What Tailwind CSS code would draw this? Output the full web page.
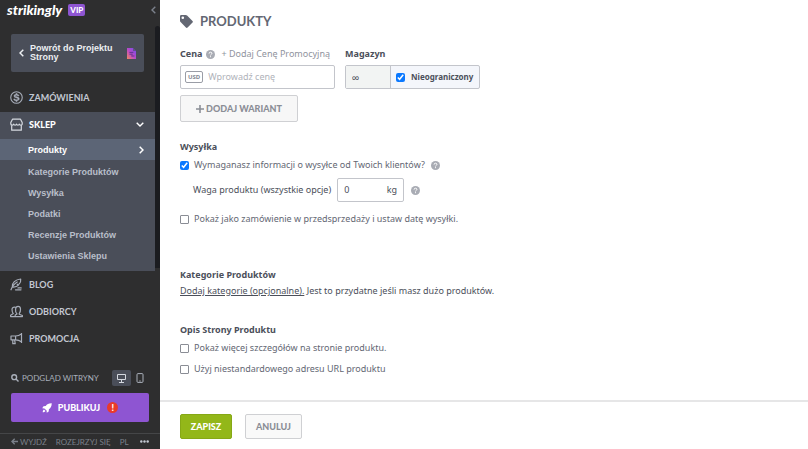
<!DOCTYPE html>
<html lang="pl">
<head>
<meta charset="utf-8">
<meta name="viewport" content="width=device-width, initial-scale=1">
<title>Strikingly – Produkty</title>
<script src="https://cdn.jsdelivr.net/npm/@tailwindcss/browser@4"></script>
</head>
<body class="flex h-screen overflow-hidden bg-white font-['Noto_Sans',sans-serif] text-[10px] leading-4 text-[#4b4f5a]">

<!-- Sidebar -->
<aside class="flex w-40 shrink-0 flex-col bg-[#2e2e2f] font-['Lato',sans-serif] font-bold text-[#c3c8d2]">
  <header class="flex h-5 items-center pr-1 pl-[7px]">
    <a href="#" class="text-[14px] leading-5 font-black text-white italic">strikingly</a>
    <span class="ml-[6px] rounded-xs bg-[#8e55d2] px-[2px] text-[8px] leading-3 font-black text-white">VIP</span>
    <button type="button" aria-label="Zwiń" class="ml-auto text-[#7b818c]">
      <svg class="h-2 w-[5px]" viewBox="0 0 5 8" fill="none" stroke="currentColor" stroke-width="1.4"><path d="M4.3.7 1 4l3.3 3.3"/></svg>
    </button>
  </header>

  <div class="flex">
    <div class="min-w-0 flex-1">
      <a href="#" class="mt-[14px] mr-[11px] ml-[11px] flex h-[38px] items-center rounded-xs bg-[#4a4e59] pr-2 pl-2 font-['Liberation_Sans',sans-serif] text-[9px] leading-[9px] text-[#eceef2]">
        <svg class="mr-[6px] h-2 w-[5px] shrink-0" viewBox="0 0 5 8" fill="none" stroke="currentColor" stroke-width="1.5"><path d="M4.3.7 1 4l3.3 3.3"/></svg>
        <span class="flex-1">Powrót do Projektu Strony</span>
        <svg class="h-[11px] w-[9px] shrink-0" viewBox="0 0 9 11"><defs><linearGradient id="page" x1="0" y1="1" x2="1" y2="0"><stop offset="0" stop-color="#f08a5c"/><stop offset=".45" stop-color="#c04bc4"/><stop offset="1" stop-color="#6a4cf0"/></linearGradient></defs><path fill="url(#page)" d="M0 0h6l3 3v8H0z"/><path d="M6 0v3h3z" fill="#4a4e59" opacity=".6"/><path d="M2.4 4.4h4M2.4 6.2h2.2m1 1.8h1.8M5 5.6v3.2" stroke="#3d2c7c" stroke-width=".7" fill="none"/></svg>
      </a>

      <nav class="mt-3 text-[9px]">
        <a href="#" class="mb-px flex h-[27px] items-center gap-[6px] pl-[10px]">
          <svg class="size-[13px]" viewBox="0 0 14 14" fill="none" stroke="#a7adb9"><circle cx="7" cy="7" r="6.2" stroke-width="1.2"/><path fill="#a7adb9" stroke="#a7adb9" stroke-width=".5" d="M6.400 2.700h1.200v.8c1.200.1 2 .8 2.100 1.800H8.300c-.1-.5-.5-.8-1.300-.8s-1.200.3-1.200.8c0 1.400 4.200.2 4.200 3 0 1.200-.9 2-2.400 2.200v.8H6.400v-.8C4.900 10.400 4 9.600 4 8.500h1.400c.1.600.7.900 1.600.9s1.500-.3 1.500-.9c0-1.600-4.200-.4-4.200-3.100 0-1.100.8-1.800 2.100-1.900z"/></svg>
          ZAMÓWIENIA
        </a>
        <div class="bg-[#4a4e59]">
          <a href="#" class="flex h-[27px] items-center gap-[6px] pr-[11px] pb-[2px] pl-[10px] font-black text-white">
            <svg class="size-[13px]" viewBox="0 0 13 13" fill="none" stroke="#d5d9e0" stroke-width="1.2" stroke-linejoin="round"><path d="M2.500 1.200h8l1.700 3.300v1.400q0 1.300-1.400 1.300T9.300 6q-.2 1.200-1.400 1.200T6.500 6q-.2 1.200-1.400 1.200T3.700 6q-.2 1.200-1.500 1.200T.8 5.900V4.500zM1.700 7.300v4.900h9.600V7.300"/></svg>
            SKLEP
            <svg class="ml-auto h-[5px] w-2" viewBox="0 0 8 5" fill="none" stroke="currentColor" stroke-width="1.4"><path d="M.7.7 4 4 7.300.7"/></svg>
          </a>
          <div class="pb-[5px] font-['Liberation_Sans',sans-serif] text-[9px] text-[#b9bfca]">
            <a href="#" aria-current="page" class="mb-px flex h-[21px] items-center bg-[#5c6576] pr-[11px] pl-7 text-white">
              Produkty
              <svg class="ml-auto h-2 w-[5px]" viewBox="0 0 5 8" fill="none" stroke="currentColor" stroke-width="1.5"><path d="M.7.7 4 4 .7 7.300"/></svg>
            </a>
            <a href="#" class="flex h-[21px] items-center pl-7">Kategorie Produktów</a>
            <a href="#" class="flex h-[21px] items-center pl-7">Wysyłka</a>
            <a href="#" class="flex h-[21px] items-center pl-7">Podatki</a>
            <a href="#" class="flex h-[21px] items-center pl-7">Recenzje Produktów</a>
            <a href="#" class="flex h-[21px] items-center pl-7">Ustawienia Sklepu</a>
          </div>
        </div>
        <a href="#" class="flex h-[27px] items-center gap-[6px] pl-[10px]">
          <svg class="size-[13px]" viewBox="0 0 13 13" fill="none" stroke="#a7adb9" stroke-width="1.2" stroke-linecap="round" stroke-linejoin="round"><path d="M1 11.800C2 8.800 3.800 6.200 7.200 4M2.300 9C1.800 5 5.300 1.500 10.700 1c.3 3-.6 4.300-1.500 5l-2 .3 1.200.9C7 8.700 5 9.300 2.300 9M5.500 11.800h5.500M8 9.900h3.200"/></svg>
          BLOG
        </a>
        <a href="#" class="flex h-[27px] items-center gap-[6px] pl-[10px]">
          <svg class="size-[13px]" viewBox="0 0 13 13" fill="none" stroke="#a7adb9" stroke-width="1.2" stroke-linejoin="round"><path d="M5.200 11.600V10L7 8.900C5.800 7.800 5.300 6 5.600 4c.2-1.700 1.200-2.700 2.500-2.700s2.300 1 2.400 2.700c.1 2-.4 3.700-1.300 4.600v.6l3.200 1.300v1.100zM5.500 2.300C3.500 1.500 2 2.700 2 4.600c0 1.700.4 3 1.300 4L.6 10.200v1.400h4.600"/></svg>
          ODBIORCY
        </a>
        <a href="#" class="flex h-[27px] items-center gap-[6px] pl-[10px]">
          <svg class="size-[13px]" viewBox="0 0 13 13" fill="none" stroke="#a7adb9" stroke-width="1.2" stroke-linejoin="round"><path d="M11.500.9v10M11.300 2C9.600 3.400 8 4 5.500 4H1v3.800h4.500c2.500 0 4 .5 5.800 1.900M2.800 7.900v3.800h2.400l-.6-3.800M5.600 4v3.800"/></svg>
          PROMOCJA
        </a>
      </nav>
    </div>
    <div class="mt-[6px] mb-[84px] w-[5px] rounded-t-full bg-[#1b1c20]"></div>
  </div>

  <div class="mt-auto">
    <div class="flex items-center pr-4 pl-[11px] text-[8px] font-normal text-[#aab0bb]">
      <svg class="mr-[3px] size-2" viewBox="0 0 8 8" fill="none" stroke="currentColor" stroke-width="1.4"><circle cx="3.200" cy="3.200" r="2.400"/><path d="m5 5 2.500 2.500"/></svg>
      PODGLĄD WITRYNY
      <button type="button" aria-label="Komputer" class="ml-auto flex h-4 w-[19px] items-center justify-center rounded-xs bg-[#4a4e59] text-[#d5d9e0]">
        <svg class="h-[9px] w-[9px]" viewBox="0 0 9 9" fill="none" stroke="currentColor"><path d="M.5.500h8v5h-8zM4.500 6v2M2 8.500h5"/></svg>
      </button>
      <button type="button" aria-label="Telefon" class="ml-[5px] flex h-4 w-2 items-center">
        <svg class="h-[10px] w-2" viewBox="0 0 8 10" fill="none" stroke="currentColor"><rect x="1" y=".6" width="6" height="8.800" rx="1"/><path d="M3.300 8h1.400"/></svg>
      </button>
    </div>
    <button type="button" class="mx-[11px] mt-[7px] flex h-[29px] w-[138px] items-center justify-center rounded-xs bg-[#8e55d2] text-[9px] font-black text-white">
      <svg class="mr-[6px] size-[10px]" viewBox="0 0 10 10" fill="currentColor"><path d="M9.700.3C6.800.2 5 1.200 3.700 3.100L1.500 3.300.2 5.200l2.200.2 2.200 2.200.2 2.200 1.900-1.300.2-2.200C8.800 5 9.800 3.200 9.700.3M2 6.500C1 7 .8 8.200.7 9.300 1.800 9.200 3 9 3.500 8z"/></svg>
      PUBLIKUJ
      <span class="ml-[7px] size-[11px] rounded-full bg-[#ea3a2c] text-[9px] leading-[11px]">!</span>
    </button>
    <footer class="mt-[11px] flex h-4 items-center border-t border-[#454648] pr-[11px] pl-[11px] text-[8px] font-normal text-[#7b808a]">
      <a href="#" class="flex items-center gap-[2px]"><svg class="size-[7px]" viewBox="0 0 7 7" fill="none" stroke="currentColor" stroke-width="1.3"><path d="M7 3.500H1M3.700.7.9 3.500l2.800 2.800"/></svg>WYJDŹ</a>
      <a href="#" class="ml-[9px]">ROZEJRZYJ SIĘ</a>
      <a href="#" class="ml-[9px]">PL</a>
      <button type="button" aria-label="Więcej" class="ml-auto text-[#c3c8d2]"><svg class="h-[3px] w-[9px]" viewBox="0 0 9 3" fill="currentColor"><circle cx="1.300" cy="1.500" r="1.200"/><circle cx="4.500" cy="1.500" r="1.200"/><circle cx="7.700" cy="1.500" r="1.200"/></svg></button>
    </footer>
  </div>
</aside>

<!-- Product editor -->
<main class="flex min-w-0 flex-1 flex-col">
  <form class="flex flex-1 flex-col">
    <div class="flex-1 px-5 pt-[11px]">
      <h1 class="flex items-center gap-[7px] font-['Lato',sans-serif] text-[13px] leading-5 font-bold text-[#636773]">
        <svg class="size-[13px]" viewBox="0 0 13 13"><path fill="currentColor" fill-rule="evenodd" d="M0 1.200Q0 0 1.200 0h4.500q.8 0 1.400.6l5.400 5.300q.8.900 0 1.700l-4.900 4.900q-.9.800-1.700 0L.6 7.100Q0 6.500 0 5.700zM2.800 1.500a1.300 1.300 0 1 0 0 2.600 1.300 1.300 0 0 0 0-2.600"/></svg>
        PRODUKTY
      </h1>

      <div class="mt-[15px] flex gap-[10px]">
        <div>
          <div class="flex items-center">
            <label for="price" class="text-[9px] font-bold">Cena</label>
            <svg class="ml-1 size-[9px]" viewBox="0 0 9 9"><circle cx="4.500" cy="4.500" r="4.500" fill="#a9acb4"/><path d="M3.100 3.600q0-1.400 1.400-1.400t1.400 1.200q0 .7-.8 1.100-.6.300-.6.900M4.500 6.200v1" fill="none" stroke="#fff"/></svg>
            <a href="#" class="ml-[6px] text-[9px] text-[#8f939d]">+ Dodaj Cenę Promocyjną</a>
          </div>
          <div class="mt-[3px] flex h-6 w-[155px] items-center rounded-xs border border-[#c3c5cb] px-1">
            <span class="rounded-xs border border-[#9a9da6] px-[2px] text-[6px] leading-[10px] font-bold text-[#858993]">USD</span>
            <input id="price" type="text" placeholder="Wprowadź cenę" class="ml-[5px] w-full min-w-0 text-[9px] outline-none placeholder:text-[#b0b3ba]">
          </div>
          <button type="button" class="mt-[6px] flex h-[27px] w-[118px] items-center justify-center gap-[2px] rounded-xs border border-[#cfd0d3] bg-[#f7f7f7] font-['Lato',sans-serif] text-[9px] font-black text-[#8b8e96]">
            <svg class="size-2" viewBox="0 0 8 8" stroke="currentColor" stroke-width="1.6"><path d="M4 0v8M0 4h8"/></svg>
            DODAJ WARIANT
          </button>
        </div>
        <div>
          <label for="stock" class="block text-[9px] font-bold">Magazyn</label>
          <div class="mt-[3px] flex h-6 items-stretch rounded-xs border border-[#c3c5cb] bg-[#f4f6fb]">
            <input id="stock" type="text" value="∞" readonly class="w-[45px] border-r border-[#c3c5cb] bg-[#f2f4f3] pl-[6px] text-[10px] outline-none">
            <label class="flex items-center gap-[6px] pr-[6px] pl-[5px] text-[8px] font-bold">
              <input type="checkbox" checked class="size-[9px] accent-[#0a78ff]">Nieograniczony
            </label>
          </div>
        </div>
      </div>

      <section class="mt-[17px]">
        <h2 class="text-[9px] font-bold">Wysyłka</h2>
        <div class="mt-[2px] flex items-center">
          <label class="flex items-center gap-[5px] text-[9px] text-[#636773]"><input type="checkbox" checked class="size-[9px] accent-[#0a78ff]">Wymaganasz informacji o wysyłce od Twoich klientów?</label>
          <svg class="ml-[6px] size-[9px]" viewBox="0 0 9 9"><circle cx="4.500" cy="4.500" r="4.500" fill="#a9acb4"/><path d="M3.100 3.600q0-1.400 1.400-1.400t1.400 1.200q0 .7-.8 1.100-.6.300-.6.900M4.500 6.200v1" fill="none" stroke="#fff"/></svg>
        </div>
        <div class="mt-[5px] flex items-center pl-[13px]">
          <label for="weight" class="text-[9px]">Waga produktu (wszystkie opcje)</label>
          <div class="ml-[6px] flex h-6 w-[67px] items-center rounded-xs border border-[#c3c5cb] px-[6px]">
            <input id="weight" type="text" value="0" class="w-full min-w-0 text-[9px] outline-none">
            <span class="text-[9px]">kg</span>
          </div>
          <svg class="ml-[7px] size-[9px]" viewBox="0 0 9 9"><circle cx="4.500" cy="4.500" r="4.500" fill="#a9acb4"/><path d="M3.100 3.600q0-1.400 1.400-1.400t1.400 1.200q0 .7-.8 1.100-.6.300-.6.900M4.500 6.200v1" fill="none" stroke="#fff"/></svg>
        </div>
        <label class="mt-[9px] flex items-center gap-[5px] text-[9px] text-[#636773]"><input type="checkbox" class="size-[9px] appearance-none rounded-[1px] border border-[#8a8d95] checked:appearance-auto">Pokaż jako zamówienie w przedsprzedaży i ustaw datę wysyłki.</label>
      </section>

      <section class="mt-10">
        <h2 class="text-[9px] font-bold">Kategorie Produktów</h2>
        <p class="text-[9px]"><a href="#" class="underline underline-offset-1">Dodaj kategorie (opcjonalne).</a> Jest to przydatne jeśli masz dużo produktów.</p>
      </section>

      <section class="mt-[23px]">
        <h2 class="text-[9px] font-bold">Opis Strony Produktu</h2>
        <label class="mt-[2px] flex items-center gap-[5px] text-[9px] text-[#636773]"><input type="checkbox" class="size-[9px] appearance-none rounded-[1px] border border-[#8a8d95] checked:appearance-auto">Pokaż więcej szczegółów na stronie produktu.</label>
        <label class="mt-[5px] flex items-center gap-[5px] text-[9px] text-[#636773]"><input type="checkbox" class="size-[9px] appearance-none rounded-[1px] border border-[#8a8d95] checked:appearance-auto">Użyj niestandardowego adresu URL produktu</label>
      </section>
    </div>

    <footer class="flex gap-[13px] border-t-2 border-[#e6e6e7] px-5 pt-3 pb-[10px] font-['Lato',sans-serif] text-[9px] font-black">
      <button type="submit" class="h-[25px] w-[52px] rounded-xs border border-[#86a816] bg-[#93b719] text-white">ZAPISZ</button>
      <button type="button" class="h-[25px] w-[57px] rounded-xs border border-[#cfd0d3] bg-[#f9f9f9] text-[#8b8e96]">ANULUJ</button>
    </footer>
  </form>
</main>
</body>
</html>
